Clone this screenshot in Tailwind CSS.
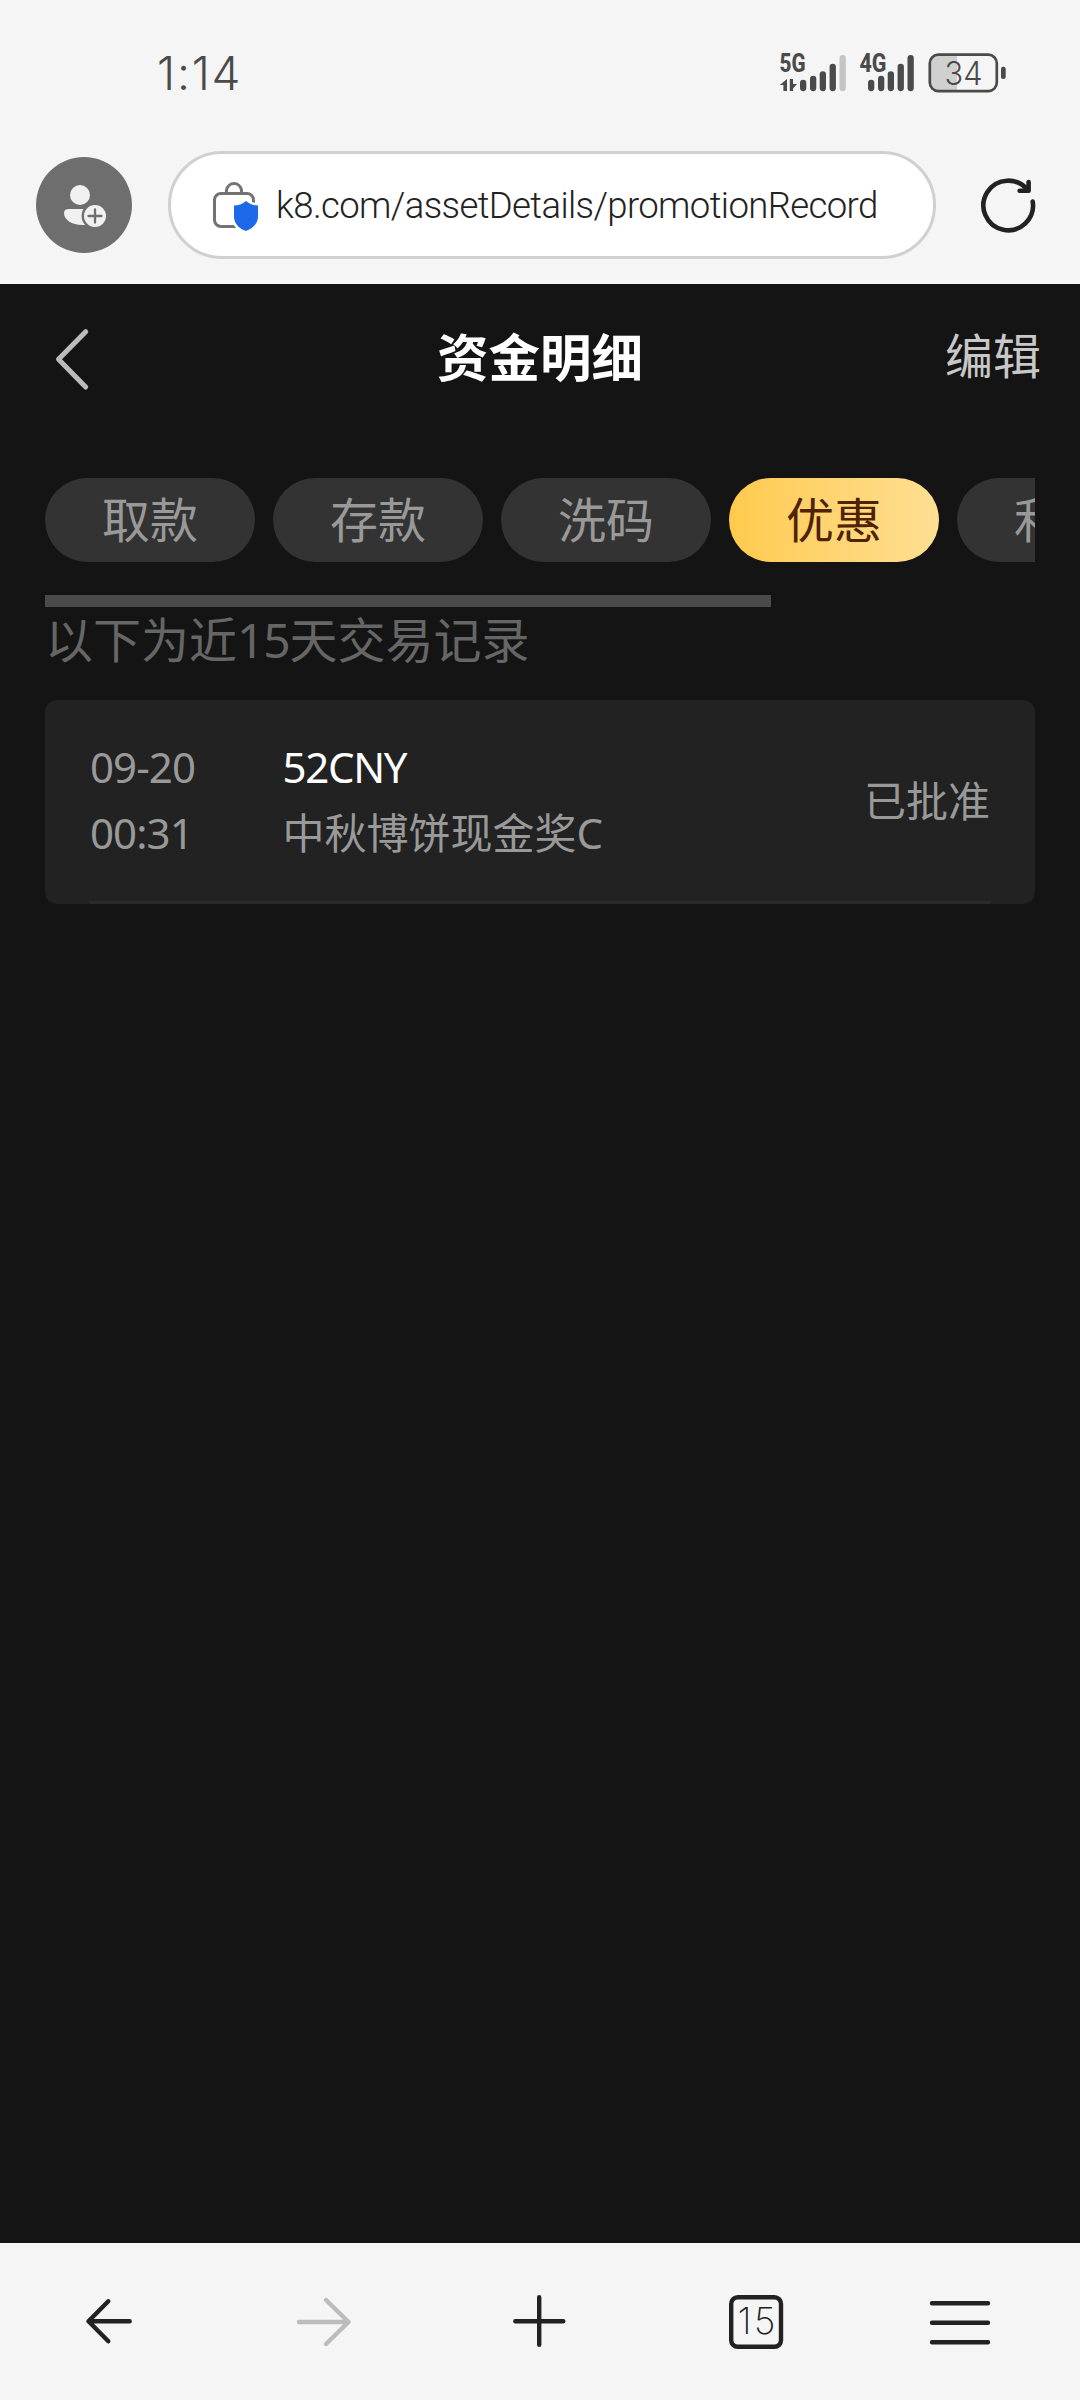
<!DOCTYPE html>
<html lang="zh-CN">
<head>
<meta charset="utf-8">
<meta name="viewport" content="width=device-width, initial-scale=1">
<title>资金明细</title>
<script src="https://cdn.jsdelivr.net/npm/@tailwindcss/browser@4"></script>
</head>
<body class="flex h-[2400px] w-[1080px] flex-col overflow-hidden bg-[#141414] font-['Noto_Sans','Noto_Sans_CJK_SC',sans-serif]">
  <!-- status bar + address bar -->
  <header class="h-[284px] shrink-0 bg-[#f5f5f5]">
    <div class="flex h-[151px] items-start justify-between pt-[45px] pr-[74px] pl-[157px]">
      <span class="font-['Inter'] text-[46px] leading-[57px] font-light tracking-[1.8px] text-[#4a4a4a]">1:14</span>
      <svg class="h-[56px] w-[228px] shrink-0" viewBox="778 45 228 56" fill="#4a4a4a">
        <text x="779.5" y="72" font-family="Roboto" font-weight="800" font-size="25" textLength="26" lengthAdjust="spacingAndGlyphs">5G</text>
        <path d="M787 79v12h-3.600v-6h-3.600zM789.800 79v12h3.200v-2.500l4-4.500h-4v-5z"/>
        <rect x="800" y="79.700" width="6.300" height="11.500" rx="3.100"/>
        <rect x="810" y="75.700" width="6.300" height="15.500" rx="3.100"/>
        <rect x="819.700" y="71.300" width="6.300" height="19.900" rx="3.100"/>
        <rect x="829.600" y="63.700" width="6.300" height="27.500" rx="3.100"/>
        <rect x="839.500" y="55" width="6.300" height="36.200" rx="3.100" fill="#c4c4c4"/>
        <text x="859.500" y="72" font-family="Roboto" font-weight="800" font-size="25" textLength="27" lengthAdjust="spacingAndGlyphs">4G</text>
        <rect x="868" y="79.700" width="6.300" height="11.500" rx="3.100"/>
        <rect x="878" y="75.700" width="6.300" height="15.500" rx="3.100"/>
        <rect x="887.700" y="71.300" width="6.300" height="19.900" rx="3.100"/>
        <rect x="897.600" y="63.700" width="6.300" height="27.500" rx="3.100"/>
        <rect x="907.500" y="55" width="6.300" height="36.200" rx="3.100"/>
        <path d="M957 55H938a8 8 0 0 0-8 8v20a8 8 0 0 0 8 8h19z" fill="#d0d0d0"/>
        <rect x="929.800" y="54.700" width="67" height="36.400" rx="8.500" fill="none" stroke="#4a4a4a" stroke-width="2.700"/>
        <rect x="1001" y="66.700" width="4.700" height="12.300" rx="2"/>
        <text x="944.500" y="85" font-family="Inter" font-weight="300" font-size="33" textLength="38" lengthAdjust="spacingAndGlyphs">34</text>
      </svg>
    </div>
    <div class="flex h-[108px] items-center pr-[42px] pl-9">
      <svg class="size-24 shrink-0" viewBox="36 157 96 96">
        <circle cx="84" cy="205" r="48" fill="#6e6e6e"/>
        <circle cx="80" cy="195" r="10" fill="#f0f0f0"/>
        <path d="M69 209h22v16h-9c-10 0-18-5-18-12q0-4 5-4z" fill="#f0f0f0"/>
        <circle cx="95" cy="216" r="12.200" fill="#f0f0f0" stroke="#6e6e6e" stroke-width="2.400"/>
        <path d="M88.500 216h13M95 209.500v13" stroke="#6e6e6e" stroke-width="2.300" stroke-linecap="round"/>
      </svg>
      <div class="ml-9 flex h-[108px] w-[768px] items-center rounded-full border-3 border-[#d0d0d0] bg-white pl-10">
        <svg class="h-14 w-12 shrink-0" viewBox="211 178 48 56" fill="none">
          <path d="M226.500 194v-3a7.700 8.500 0 0 1 15 0v3" stroke="#737373" stroke-width="3"/>
          <rect x="214.500" y="194.500" width="39" height="33" rx="6.500" stroke="#737373" stroke-width="3"/>
          <path d="M246 202c3.500 3.200 8 4.500 12 4.500v11c0 7-5 12-12 14.500-7-2.500-12-7.500-12-14.500v-11c4 0 8.500-1.300 12-4.500z" fill="#1e68ea" stroke="#fff" stroke-width="5" paint-order="stroke"/>
        </svg>
        <span class="ml-[17px] pt-0.5 font-['Roboto'] text-[36.5px] leading-none font-light tracking-[-0.62px] whitespace-nowrap text-[#222]">k8.com/assetDetails/promotionRecord</span>
      </div>
      <svg class="ml-[42px] size-[60px] shrink-0" viewBox="978 175 60 60" fill="none" stroke="#222" stroke-width="4.600" stroke-linecap="round" stroke-linejoin="round">
        <path d="M1032.700 201.500A24.800 24.800 0 1 1 1028 190.500"/>
        <path d="M1028.600 182v8.700h-9"/>
      </svg>
    </div>
  </header>

  <main class="flex flex-1 flex-col">
    <div class="grid h-[150px] grid-cols-[1fr_auto_1fr] items-center px-[39px]">
      <svg class="ml-[15px] h-[66px] w-9" viewBox="54 326 36 66" fill="none" stroke="#bcbcbc" stroke-width="5" stroke-linecap="round" stroke-linejoin="round"><path d="M85.700 331.700 58.500 359.300l27.200 27.700"/></svg>
      <h1 class="pb-[3px] text-[51.5px] leading-[75px] font-bold text-white">资金明细</h1>
      <button class="justify-self-end pb-1.5 text-[48px] leading-[70px] text-[#c8c8c8]">编辑</button>
    </div>

    <nav class="mx-[45px] mt-[44px] flex h-[84px] gap-[18px] overflow-hidden text-[48px] leading-[84px] text-[#999]">
      <button class="w-[210px] shrink-0 rounded-full bg-[#333]">取款</button>
      <button class="w-[210px] shrink-0 rounded-full bg-[#333]">存款</button>
      <button class="w-[210px] shrink-0 rounded-full bg-[#333]">洗码</button>
      <button class="w-[210px] shrink-0 rounded-full bg-linear-to-r from-[#ffca4c] to-[#ffdf92] text-[#4f2200]">优惠</button>
      <button class="w-[210px] shrink-0 rounded-full bg-[#333]">利息</button>
    </nav>
    <div class="mt-[33px] ml-[45px] h-3 w-[726px] bg-[#4a4a4a]"></div>

    <p class="ml-[45px] h-[93px] text-[48px] leading-[66px] text-[#666]">以下为近<span class="tracking-[-1.2px]">15</span>天交易记录</p>

    <section class="mx-[45px] h-[204px] rounded-[12px] bg-[#222] px-[45px] text-[42px] leading-[66px] text-[#999]">
      <div class="flex h-full items-center border-b-3 border-[#2b2b2b]">
        <div class="w-[192.5px] pb-0.5 tracking-[-0.9px]"><p>09-20</p><p>00:31</p></div>
        <div class="flex-1 pb-0.5"><p class="tracking-[-1.3px] text-white">52CNY</p><p>中秋博饼现金奖C</p></div>
        <span>已批准</span>
      </div>
    </section>
  </main>

  <!-- browser toolbar -->
  <footer class="flex h-[157px] shrink-0 items-center bg-[#f5f5f5] pb-px pl-[83px]">
    <svg class="h-[60px] w-[52px]" viewBox="83 2291 52 60" fill="none" stroke="#222" stroke-width="4.400" stroke-linecap="round" stroke-linejoin="round"><path d="M129.700 2321.300H88.500M108.300 2301.300l-19.800 20 19.800 20"/></svg>
    <svg class="ml-[159px] h-[60px] w-[60px]" viewBox="294 2291 60 60" fill="none" stroke="#bcbcbc" stroke-width="4.400" stroke-linecap="round" stroke-linejoin="round"><path d="M299 2322h49.500M326 2300l22.500 22-22.500 22"/></svg>
    <svg class="ml-[155px] h-[60px] w-[60px]" viewBox="509 2291 60 60" fill="none" stroke="#222" stroke-width="4.400" stroke-linecap="round"><path d="M515.300 2321.300h48M539.200 2297.300v47.500"/></svg>
    <svg class="ml-[157px] h-[60px] w-[60px]" viewBox="726 2291 60 60" fill="none">
      <rect x="731.200" y="2297.200" width="49.800" height="49.600" rx="6.500" stroke="#222" stroke-width="4.400"/>
      <text x="737.500" y="2334" font-family="Inter" font-weight="200" font-size="37" fill="#222" textLength="38">15</text>
    </svg>
    <svg class="ml-[141px] h-[60px] w-[66px]" viewBox="927 2291 66 60" fill="none" stroke="#222" stroke-width="4.400" stroke-linecap="round"><path d="M932 2303.300h56M932 2322.700h56M932 2342.200h56"/></svg>
  </footer>
</body>
</html>
